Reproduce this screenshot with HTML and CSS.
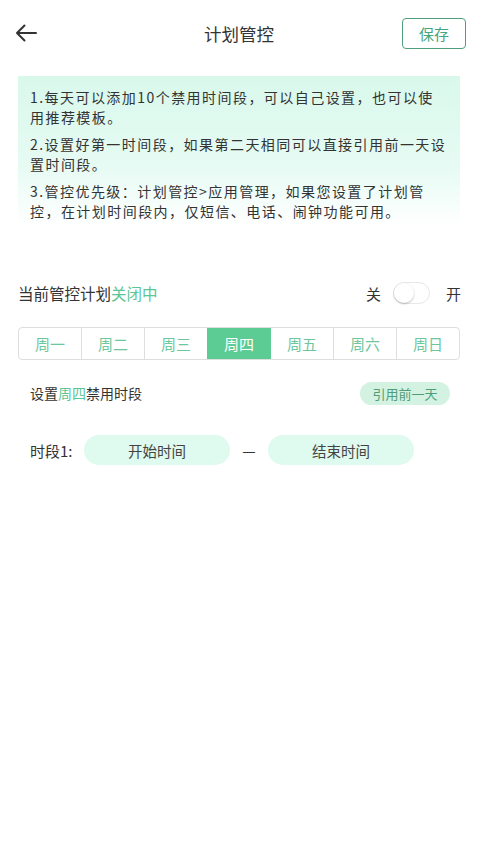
FILE: index.html
```html
<!DOCTYPE html>
<html lang="zh">
<head>
<meta charset="utf-8">
<link rel="stylesheet" href="styles.css">
</head>
<body>
<div class="page">
  <header class="topbar">
    <div class="back">
      <svg width="22" height="18" viewBox="0 0 22 18"><path d="M21 9H2M9.5 1.5L2 9l7.5 7.5" fill="none" stroke="#333" stroke-width="2" stroke-linecap="round" stroke-linejoin="round"/></svg>
    </div>
    <h1 class="title">计划管控</h1>
    <button class="save">保存</button>
  </header>

  <section class="notice">
    <p>1.每天可以添加10个禁用时间段，可以自己设置，也可以使<br>用推荐模板。</p>
    <p>2.设置好第一时间段，如果第二天相同可以直接引用前一天设置时间段。</p>
    <p>3.管控优先级：计划管控&gt;应用管理，如果您设置了计划管控，在计划时间段内，仅短信、电话、闹钟功能可用。</p>
  </section>

  <div class="status">
    <div class="status-text">当前管控计划<span class="green">关闭中</span></div>
    <div class="switch-wrap">
      <span>关</span>
      <span class="switch"><span class="knob"></span></span>
      <span>开</span>
    </div>
  </div>

  <div class="tabs">
    <div class="tab">周一</div>
    <div class="tab">周二</div>
    <div class="tab">周三</div>
    <div class="tab active">周四</div>
    <div class="tab">周五</div>
    <div class="tab">周六</div>
    <div class="tab">周日</div>
  </div>

  <div class="setrow">
    <div class="settext">设置<span class="green">周四</span>禁用时段</div>
    <div class="quote">引用前一天</div>
  </div>

  <div class="period">
    <span class="plabel">时段1:</span>
    <span class="pill">开始时间</span>
    <span class="dash">—</span>
    <span class="pill">结束时间</span>
  </div>
</div>
</body>
</html>
```

FILE: styles.css
```css
* { box-sizing: border-box; }
html, body { margin: 0; padding: 0; background: #fff; }
body {
  font-family: "Noto Sans CJK SC", "Noto Sans", sans-serif;
  color: #333;
  width: 478px;
  height: 850px;
  overflow: hidden;
}
.page { padding: 0 18px; }
.topbar {
  height: 66px;
  display: flex;
  align-items: center;
  justify-content: space-between;
  position: relative;
}
.back { width: 24px; margin-left: -3px; display: flex; align-items: center; }
.title {
  position: absolute;
  left: 0; right: 0;
  text-align: center;
  margin: 0;
  font-size: 17.5px;
  font-weight: normal;
  color: #333;
  pointer-events: none;
}
.save {
  width: 64px;
  height: 31px;
  margin-right: -6px;
  border: 1px solid #4f9e7e;
  border-radius: 4px;
  background: #fff;
  color: #45a57c;
  font-family: inherit;
  font-size: 15px;
  padding: 0;
}
.notice {
  margin-top: 10px;
  padding: 11px 10px 14px 12px;
  background: linear-gradient(to bottom, #d9f8ec 0%, #e6fbf3 60%, #ffffff 100%);
  height: 150px;
}
.notice p {
  margin: 0 0 7px 0;
  font-size: 14px;
  line-height: 20px;
  letter-spacing: 1.45px;
  color: #333;
}
.status {
  margin-top: 55px;
  display: flex;
  align-items: center;
  justify-content: space-between;
  height: 24px;
}
.status-text { font-size: 15.5px; color: #333; }
.green { color: #5cc594; }
.switch-wrap {
  display: flex;
  align-items: center;
  font-size: 15px;
  color: #333;
  margin-right: -1px;
}
.switch {
  width: 37px;
  height: 22px;
  border-radius: 11px;
  border: 1px solid #e8e8e8;
  background: #fff;
  margin: 0 16px 0 12px;
  position: relative;
  display: inline-block;
}
.knob {
  position: absolute;
  left: 0; top: 0;
  width: 20px; height: 20px;
  border-radius: 50%;
  background: #fff;
  box-shadow: 0 1px 2px rgba(0,0,0,0.25);
}
.tabs {
  margin-top: 22px;
  display: flex;
  height: 33px;
  border: 1px solid #dedede;
  border-radius: 4px;
  overflow: hidden;
}
.tab {
  flex: 1;
  display: flex;
  align-items: center;
  justify-content: center;
  font-size: 15px;
  color: #6dc79e;
  border-left: 1px solid #dedede;
}
.tab:first-child { border-left: none; }
.tab.active { background: #5ccb94; color: #fff; border-left-color: #5ccb94; }
.tab.active + .tab { border-left-color: #5ccb94; }
.setrow {
  margin-top: 21px;
  padding: 0 10px 0 12px;
  display: flex;
  align-items: center;
  justify-content: space-between;
  height: 24px;
}
.settext { font-size: 14px; color: #333; }
.quote {
  width: 90px;
  height: 23px;
  border-radius: 12px;
  background: #d3f2e2;
  color: #4e9d78;
  font-size: 13px;
  display: flex;
  align-items: center;
  justify-content: center;
}
.period {
  margin-top: 30px;
  padding-left: 12px;
  display: flex;
  align-items: center;
  height: 30px;
}
.plabel { font-size: 15px; color: #333; width: 54px; }
.pill {
  width: 146px;
  height: 30px;
  border-radius: 15px;
  background: #dffaee;
  display: flex;
  align-items: center;
  justify-content: center;
  font-size: 14.5px;
  color: #444;
}
.dash { width: 38px; text-align: center; font-size: 15px; color: #333; }
```
